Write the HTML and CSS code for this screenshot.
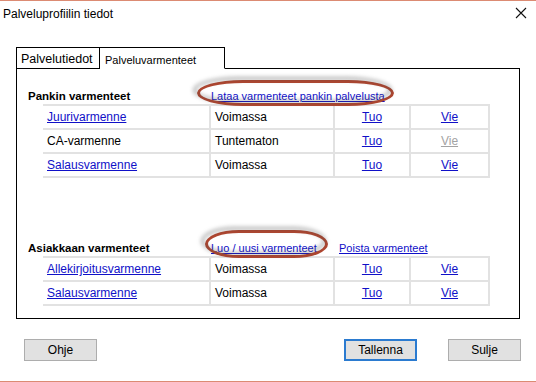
FILE: index.html
```html
<!DOCTYPE html>
<html lang="fi">
<head>
<meta charset="utf-8">
<title>Palveluprofiilin tiedot</title>
<link rel="stylesheet" href="styles.css">
</head>
<body>
<div class="window">
  <div class="titlebar">
    <span class="title">Palveluprofiilin tiedot</span>
    <svg class="close" width="12" height="12" viewBox="0 0 12 12" aria-hidden="true">
      <path d="M1 1 L11 11 M11 1 L1 11" stroke="#111" stroke-width="1.1" fill="none"/>
    </svg>
  </div>
  <div class="content">
    <div class="tabs">
      <div class="tab tab-inactive">Palvelutiedot</div>
      <div class="tab tab-active">Palveluvarmenteet</div>
    </div>
    <div class="panel">
      <div class="section section-first">
        <div class="sec-head">
          <span class="sec-label">Pankin varmenteet</span>
          <a class="link" href="#">Lataa varmenteet pankin palvelusta</a>
        </div>
        <table class="certs">
          <tr>
            <td class="c1"><a class="link" href="#">Juurivarmenne</a></td>
            <td class="c2">Voimassa</td>
            <td class="c3"><a class="link" href="#">Tuo</a></td>
            <td class="c4"><a class="link" href="#">Vie</a></td>
          </tr>
          <tr>
            <td class="c1">CA-varmenne</td>
            <td class="c2">Tuntematon</td>
            <td class="c3"><a class="link" href="#">Tuo</a></td>
            <td class="c4"><span class="link disabled">Vie</span></td>
          </tr>
          <tr>
            <td class="c1"><a class="link" href="#">Salausvarmenne</a></td>
            <td class="c2">Voimassa</td>
            <td class="c3"><a class="link" href="#">Tuo</a></td>
            <td class="c4"><a class="link" href="#">Vie</a></td>
          </tr>
        </table>
      </div>
      <div class="section section-second">
        <div class="sec-head">
          <span class="sec-label">Asiakkaan varmenteet</span>
          <span class="sec-link-box"><a class="link" href="#">Luo / uusi varmenteet</a></span>
          <a class="link" href="#">Poista varmenteet</a>
        </div>
        <table class="certs">
          <tr>
            <td class="c1"><a class="link" href="#">Allekirjoitusvarmenne</a></td>
            <td class="c2">Voimassa</td>
            <td class="c3"><a class="link" href="#">Tuo</a></td>
            <td class="c4"><a class="link" href="#">Vie</a></td>
          </tr>
          <tr>
            <td class="c1"><a class="link" href="#">Salausvarmenne</a></td>
            <td class="c2">Voimassa</td>
            <td class="c3"><a class="link" href="#">Tuo</a></td>
            <td class="c4"><a class="link" href="#">Vie</a></td>
          </tr>
        </table>
      </div>
      <div class="mark mark-one"></div>
      <div class="mark mark-two"></div>
    </div>
    <div class="buttons">
      <button class="btn" type="button">Ohje</button>
      <span class="spacer"></span>
      <button class="btn btn-default" type="button">Tallenna</button>
      <button class="btn btn-last" type="button">Sulje</button>
    </div>
  </div>
</div>
</body>
</html>
```
FILE: styles.css
```css
* { box-sizing: border-box; }

html, body {
  margin: 0;
  padding: 0;
  background: #ffffff;
}

body {
  font-family: "Liberation Sans", Arial, sans-serif;
  color: #000;
}

.window {
  width: 536px;
  height: 382px;
  border-top: 1px solid #dc8b73;
  border-bottom: 1px solid #dc8b73;
  background: #fff;
  overflow: hidden;
}

.titlebar {
  height: 28px;
  display: flex;
  align-items: center;
  justify-content: space-between;
  padding: 0 9px 2px 3px;
}

.title {
  font-size: 12px;
  line-height: 16px;
}

.close {
  display: block;
  margin-top: -2px;
}

.content {
  padding: 0 16px;
}

.tabs {
  display: flex;
  align-items: flex-end;
  margin-top: 18px;
  margin-bottom: -1px;
  height: 22px;
}

.tab {
  height: 22px;
  border: 1px solid #000;
  background: #fff;
  white-space: nowrap;
}

.tab-inactive {
  width: 84px;
  font-size: 12.5px;
  line-height: 16px;
  padding: 3px 0 0 4px;
}

.tab-active {
  width: 125px;
  border-left: none;
  border-bottom: 1px solid #fff;
  font-size: 11px;
  line-height: 16px;
  padding: 4px 0 0 5px;
  position: relative;
  z-index: 1;
}

.panel {
  position: relative;
  height: 251px;
  border: 1px solid #000;
  background: #fff;
}

.section {
  padding-left: 11px;
}

.section-first {
  padding-top: 20px;
}

.section-second {
  margin-top: 63px;
}

.sec-head {
  display: flex;
  align-items: center;
  height: 15px;
  font-size: 11px;
  line-height: 15px;
  white-space: nowrap;
}

.sec-label {
  width: 183px;
  font-weight: bold;
  font-size: 11.5px;
}

.sec-link-box {
  width: 128px;
}

.link {
  color: #1010c8;
  text-decoration: underline;
}

.link.disabled {
  color: #a3a3a3;
}

.certs {
  margin-left: 15px;
  border-collapse: separate;
  border-spacing: 0;
  table-layout: fixed;
  width: 447px;
  border-top: 2px solid #e2e2e2;
  font-size: 12px;
}

.certs td {
  height: 24px;
  line-height: 22px;
  padding: 0 4px;
  border-bottom: 2px solid #e2e2e2;
  border-right: 2px solid #e2e2e2;
  white-space: nowrap;
}

.certs .c1 { width: 168px; }
.certs .c2 { width: 124px; }
.certs .c3 { width: 76px; text-align: center; }
.certs .c4 { width: 79px; text-align: center; }

.mark {
  position: absolute;
  border: 3.5px solid #b2462f;
}

.mark::before {
  content: "";
  position: absolute;
  left: -7px;
  top: -6px;
  right: -1px;
  bottom: 0;
  border: 3px solid rgba(70, 70, 70, 0.45);
  border-radius: inherit;
  filter: blur(2px);
}

.mark-one {
  left: 180px;
  top: 11px;
  width: 197px;
  height: 26px;
  border-radius: 46px / 13px;
}

.mark-two {
  left: 188px;
  top: 161px;
  width: 123px;
  height: 28px;
  border-radius: 34px / 14px;
}

.buttons {
  display: flex;
  margin-top: 20px;
  padding-left: 8px;
  margin-right: -1px;
}

.spacer {
  flex: 1;
}

.btn {
  width: 73px;
  height: 22px;
  background: #e1e1e1;
  border: 1px solid #adadad;
  font-family: "Liberation Sans", Arial, sans-serif;
  font-size: 12px;
  color: #000;
  padding: 0;
}

.btn-default {
  border: 2px solid #2b7bd0;
}

.btn-last {
  margin-left: 31px;
}
```
